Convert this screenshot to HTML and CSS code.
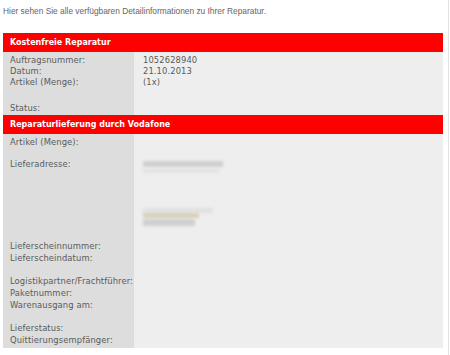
FILE: index.html
```html
<!DOCTYPE html>
<html lang="de">
<head>
    <meta charset="UTF-8">
    <title>Reparaturdetails</title>
    <link rel="stylesheet" href="styles.css">
</head>
<body>
    <div class="page">
        <p class="intro">Hier sehen Sie alle verfügbaren Detailinformationen zu Ihrer Reparatur.</p>

        <div class="block">
            <div class="block-head">Kostenfreie Reparatur</div>
            <div class="block-body first">
                <div class="labels">
                    <div class="line">Auftragsnummer:</div>
                    <div class="line">Datum:</div>
                    <div class="line">Artikel (Menge):</div>
                    <div class="gap"></div>
                    <div class="line">Status:</div>
                </div>
                <div class="values">
                    <div class="line">1052628940</div>
                    <div class="line">21.10.2013</div>
                    <div class="line">(1x)</div>
                    <div class="gap"></div>
                    <div class="line"></div>
                </div>
            </div>
        </div>

        <div class="block">
            <div class="block-head">Reparaturlieferung durch Vodafone</div>
            <div class="block-body second">
                <div class="labels">
                    <div class="line">Artikel (Menge):</div>
                    <div class="line"></div>
                    <div class="line">Lieferadresse:</div>
                    <div class="address"></div>
                    <div class="line wide">Lieferscheinnummer:</div>
                    <div class="line wide">Lieferscheindatum:</div>
                    <div class="line wide"></div>
                    <div class="line wide">Logistikpartner/Frachtführer:</div>
                    <div class="line wide">Paketnummer:</div>
                    <div class="line wide">Warenausgang am:</div>
                    <div class="line wide"></div>
                    <div class="line wide">Lieferstatus:</div>
                    <div class="line wide">Quittierungsempfänger:</div>
                </div>
                <div class="values">
                    <div class="line"></div>
                    <div class="line"></div>
                    <div class="line"></div>
                    <div class="address">
                        <!-- unkenntlich gemachte Adresse -->
                        <span class="smudge s1"></span>
                        <span class="smudge s2"></span>
                        <span class="smudge s3"></span>
                        <span class="smudge s4"></span>
                        <span class="smudge s5"></span>
                    </div>
                </div>
            </div>
        </div>
    </div>
</body>
</html>
```

FILE: styles.css
```css
/* Base */
body {
    margin: 0;
    background: #fff;
    font-family: "DejaVu Sans", Verdana, sans-serif;
    font-size: 8.4px;
    letter-spacing: 0.1px;
    color: #5a5a5a;
}

.page {
    width: 449px;
    height: 355px;
    padding: 0 3px;
    box-sizing: border-box;
    border-right: 1px solid #e2e2e2;
    overflow: hidden;
}

.intro {
    margin: 0;
    padding-top: 6px;
    height: 33px;
    box-sizing: border-box;
    font-family: "Liberation Sans", Arial, sans-serif;
    font-size: 8.35px;
    letter-spacing: 0;
    line-height: 10px;
    color: #666;
}

/* Blocks */
.block {
    width: 440px;
}

.block-head {
    height: 19px;
    line-height: 19px;
    padding-left: 7px;
    background: #ff0000;
    color: #fff;
    font-size: 8px;
    letter-spacing: 0;
    font-weight: bold;
}

.block-body {
    display: grid;
    grid-template-columns: 131px 1fr;
}

.labels {
    background: #dddddd;
    padding: 3px 0 1px 7px;
}

.values {
    background: #eeeeee;
    padding: 3px 0 1px 9px;
}

.line {
    height: 11px;
    line-height: 11px;
    white-space: nowrap;
}

.line.wide {
    height: 11.8px;
    line-height: 11.8px;
}

.gap {
    height: 15px;
}

/* Address, blurred out */
.address {
    height: 70.8px;
    position: relative;
}

.values .address {
    margin-top: -11px;
    height: 81.8px;
}

.smudge {
    display: block;
    position: absolute;
    left: 0;
    filter: blur(1.6px);
}

.s1 { top: 2px;  width: 80px; height: 6px; background: #cfcfcf; }
.s2 { top: 10px; width: 76px; height: 4px; background: #e2e2e2; }
.s3 { top: 49px; width: 70px; height: 5px; background: #e0e0e0; }
.s4 { top: 54px; width: 56px; height: 5px; background: #d6d0b8; }
.s5 { top: 60px; width: 52px; height: 7px; background: #cfcfcf; }
```
